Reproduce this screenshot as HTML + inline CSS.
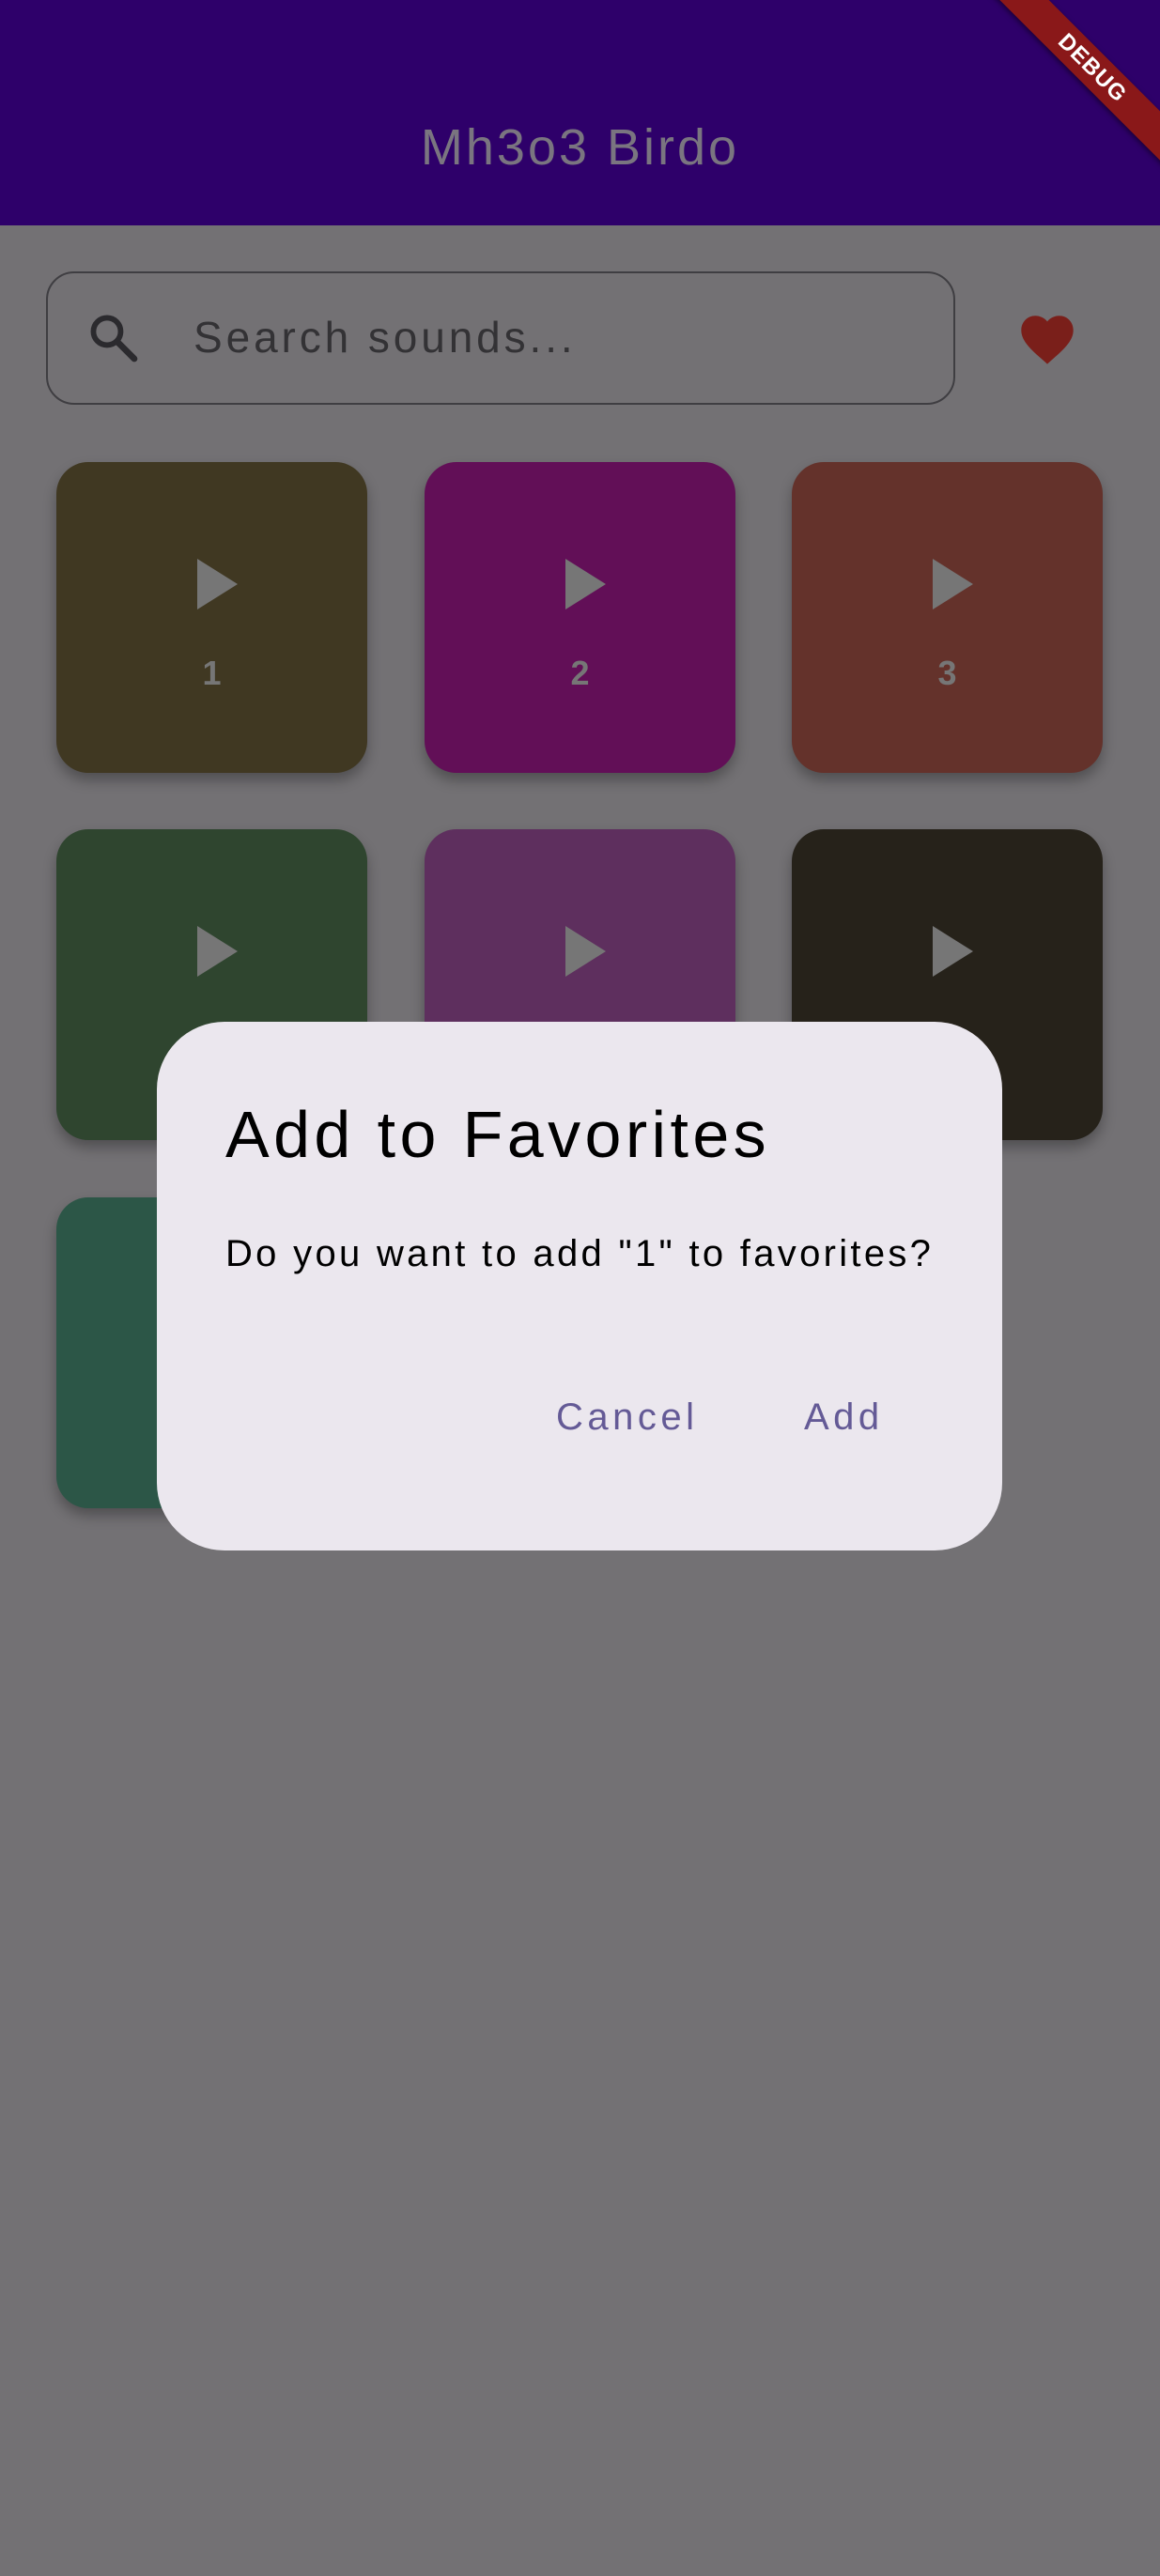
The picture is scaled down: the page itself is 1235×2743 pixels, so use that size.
<!DOCTYPE html>
<html><head><meta charset="utf-8"><style>
html,body{margin:0;padding:0;}
body{width:1235px;height:2743px;background:#737174;position:relative;overflow:hidden;font-family:"Liberation Sans",sans-serif;}
.hdr{position:absolute;left:0;top:0;width:1235px;height:240px;background:#2e006a;}
.title{position:absolute;left:0;width:1235px;top:127px;text-align:center;font-size:54px;color:#7a7580;line-height:60px;letter-spacing:3px;}
.rib{position:absolute;left:1013px;top:54px;width:300px;height:37px;background:#8a1819;transform:rotate(45deg);color:#fff;font-weight:bold;font-size:24px;line-height:37px;text-align:center;letter-spacing:1px;box-shadow:0 2px 6px rgba(0,0,0,.5);}
.search{position:absolute;left:49px;top:289px;border:2px solid #3f3e42;border-radius:30px;box-sizing:border-box;width:968px;height:142px;}
.stext{position:absolute;left:206px;top:331px;font-size:46px;color:#333235;letter-spacing:3.9px;line-height:56px;}
.tile{position:absolute;width:331px;height:331px;border-radius:34px;box-shadow:0 8px 14px rgba(0,0,0,.3);}
.play{position:absolute;left:150px;top:103px;width:0;height:0;border-top:27px solid transparent;border-bottom:27px solid transparent;border-left:43px solid #767676;}
.num{position:absolute;left:0;width:331px;top:204px;text-align:center;font-size:36px;font-weight:bold;color:#767676;}
.dlg{position:absolute;left:167px;top:1088px;width:900px;height:563px;background:#ebe7ee;border-radius:72px;}
.dt{position:absolute;left:240px;top:1168px;font-size:70px;color:#000;line-height:80px;letter-spacing:4.4px;}
.db{position:absolute;left:240px;top:1310px;font-size:40px;color:#000;letter-spacing:3.3px;line-height:50px;}
.btn{position:absolute;top:1484px;font-size:40px;color:#645a96;line-height:50px;letter-spacing:4.5px;}
</style></head><body>
<div class="hdr"></div>
<div class="title">Mh3o3 Birdo</div>
<div class="rib">DEBUG</div>
<div class="search"></div>
<svg style="position:absolute;left:90px;top:330px" width="60" height="58" viewBox="0 0 24 24"><circle cx="9.5" cy="9.5" r="6" fill="none" stroke="#2b2a2e" stroke-width="2.4"/><path d="M14 14 L21.5 21.5" stroke="#2b2a2e" stroke-width="2.8" stroke-linecap="round"/></svg>
<div class="stext">Search sounds...</div>
<svg style="position:absolute;left:1083px;top:331px" width="64" height="58" viewBox="0 0 24 22"><path d="M12 21.5 L10.5 20.1 C5 15.3 1.5 12 1.5 7.8 C1.5 4.5 4 2 7.2 2 C9 2 10.9 2.9 12 4.3 C13.1 2.9 15 2 16.8 2 C20 2 22.5 4.5 22.5 7.8 C22.5 12 19 15.3 13.5 20.1 Z" fill="#7a1f1a"/></svg>

<div class="tile" style="left:60px;top:492px;background:#403822"><div class="play"></div><div class="num">1</div></div>
<div class="tile" style="left:452px;top:492px;background:#620f57"><div class="play"></div><div class="num">2</div></div>
<div class="tile" style="left:843px;top:492px;background:#64322b"><div class="play"></div><div class="num">3</div></div>
<div class="tile" style="left:60px;top:883px;background:#2f452f"><div class="play"></div></div>
<div class="tile" style="left:452px;top:883px;background:#5e2f5e"><div class="play"></div></div>
<div class="tile" style="left:843px;top:883px;background:#26221a"><div class="play"></div></div>
<div class="tile" style="left:60px;top:1275px;background:#2c5647"></div>

<div class="dlg"></div>
<div class="dt">Add to Favorites</div>
<div class="db">Do you want to add "1" to favorites?</div>
<div class="btn" style="left:592px">Cancel</div>
<div class="btn" style="left:856px">Add</div>
</body></html>
